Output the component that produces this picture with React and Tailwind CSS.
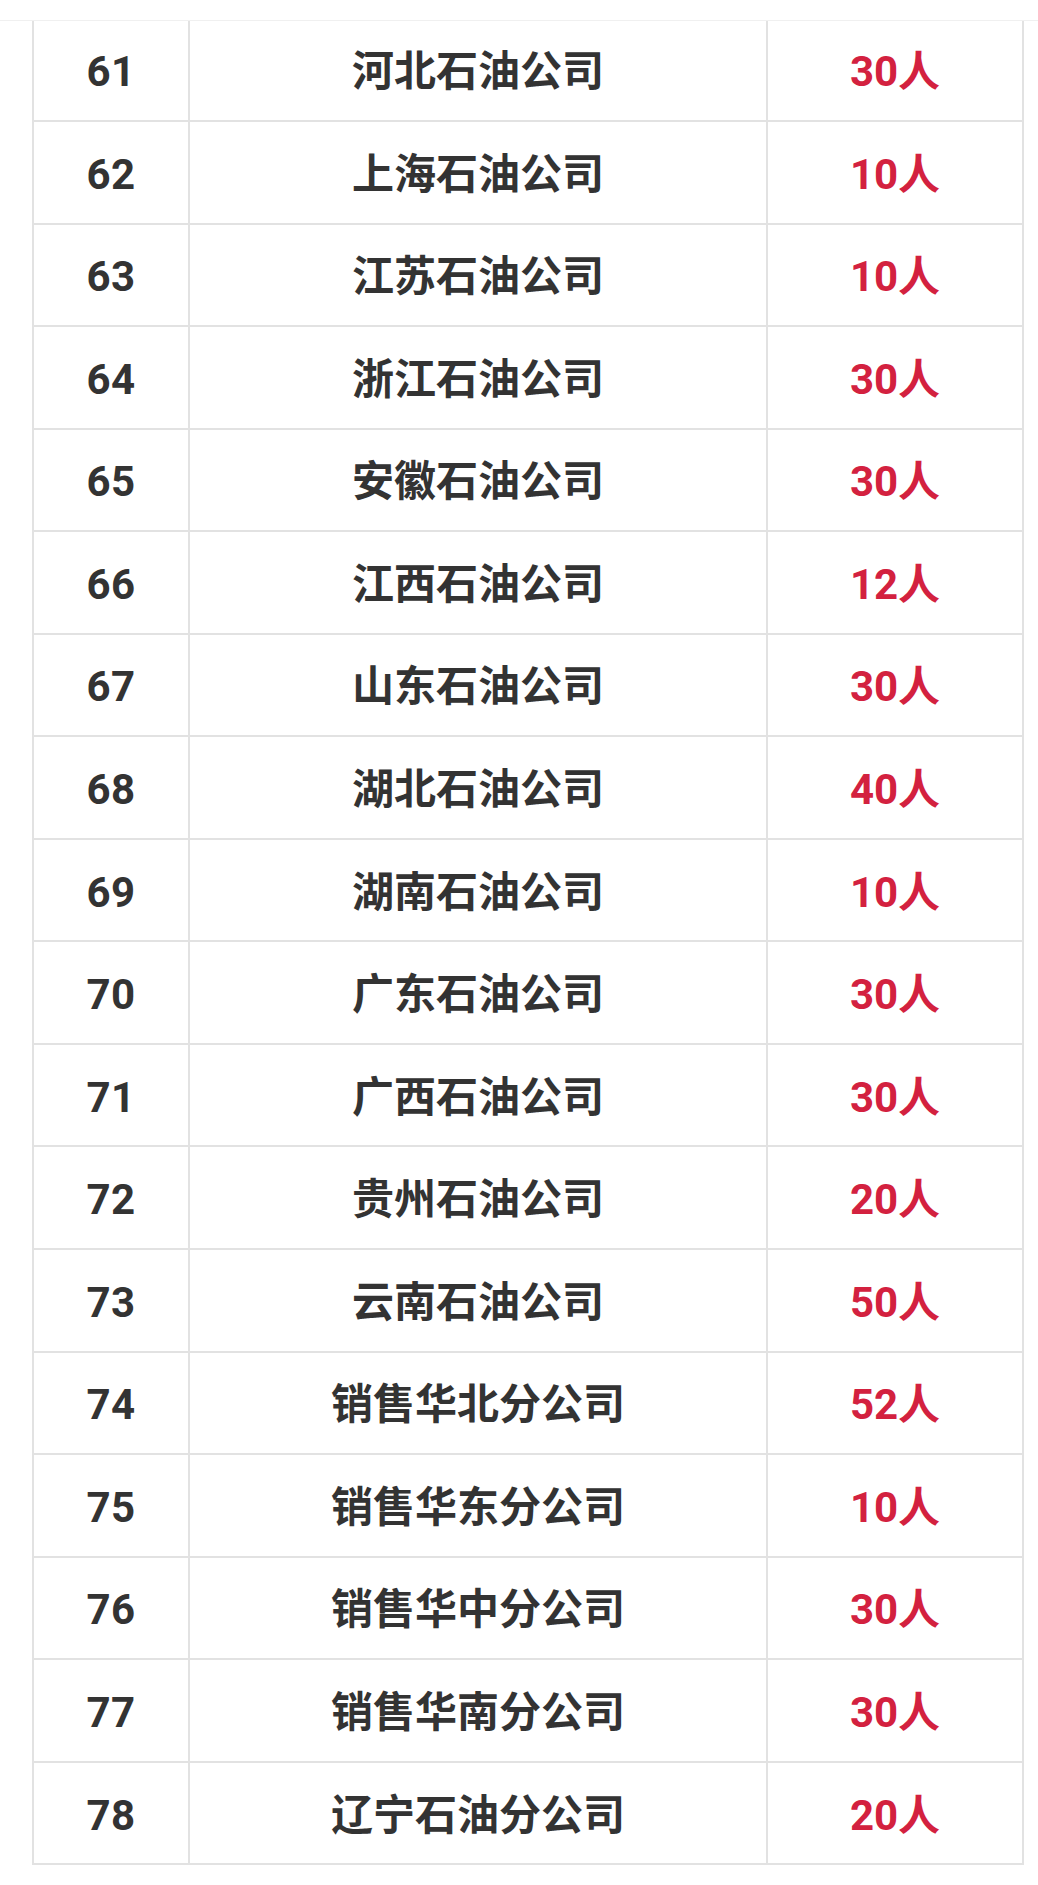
import React from "react";

const rows = [
  ["61", "河北石油公司", "30人"],
  ["62", "上海石油公司", "10人"],
  ["63", "江苏石油公司", "10人"],
  ["64", "浙江石油公司", "30人"],
  ["65", "安徽石油公司", "30人"],
  ["66", "江西石油公司", "12人"],
  ["67", "山东石油公司", "30人"],
  ["68", "湖北石油公司", "40人"],
  ["69", "湖南石油公司", "10人"],
  ["70", "广东石油公司", "30人"],
  ["71", "广西石油公司", "30人"],
  ["72", "贵州石油公司", "20人"],
  ["73", "云南石油公司", "50人"],
  ["74", "销售华北分公司", "52人"],
  ["75", "销售华东分公司", "10人"],
  ["76", "销售华中分公司", "30人"],
  ["77", "销售华南分公司", "30人"],
  ["78", "辽宁石油分公司", "20人"],
];

const font = { fontFamily: 'Roboto, "Noto Sans CJK SC", sans-serif' };

export default function App() {
  return (
    <div className="relative w-[1038px] h-[1885px] bg-white overflow-hidden" style={font}>
      <div className="absolute left-0 top-0 w-full h-[21px] bg-white border-b border-[#f0f0f0] z-10" />
      <div className="pt-[17.44px] pl-[32px]">
        <div className="w-[992px] border-x-2 border-t-2 border-[#e2e2e2]">
          {rows.map(([n, name, cnt]) => (
            <div key={n} className="flex h-[102.56px] border-b-2 border-[#e2e2e2] box-border">
              <div className="w-[156px] pt-[5px] border-r-2 border-[#e2e2e2] flex items-center justify-center text-[42px] font-bold text-[#333333] leading-none tracking-[0.5px]">
                {n}
              </div>
              <div className="w-[578px] pt-[5px] border-r-2 border-[#e2e2e2] flex items-center justify-center text-[42px] font-bold text-[#333333] leading-none">
                {name}
              </div>
              <div className="flex-1 pt-[5px] flex items-center justify-center text-[42px] font-bold text-[#d3213f] leading-none">
                {cnt}
              </div>
            </div>
          ))}
        </div>
      </div>
    </div>
  );
}
